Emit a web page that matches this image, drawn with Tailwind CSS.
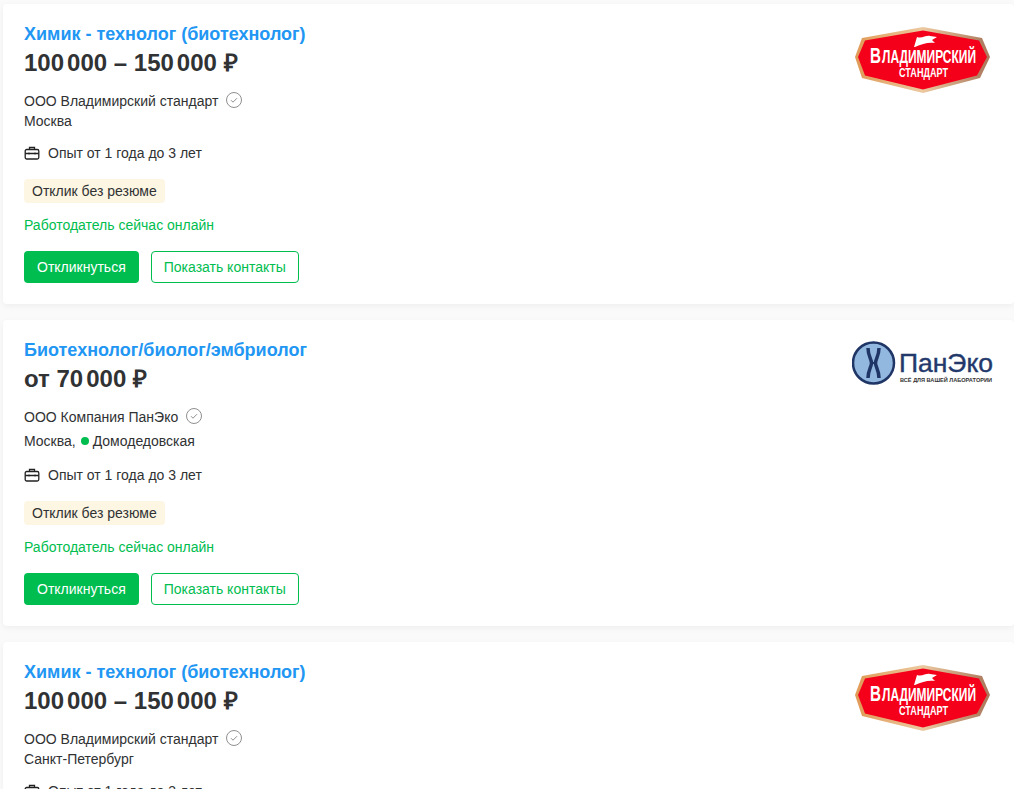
<!DOCTYPE html>
<html lang="ru"><head><meta charset="utf-8"><script src="https://cdn.jsdelivr.net/npm/@tailwindcss/browser@4"></script></head>
<body class="bg-[#fafafa] overflow-hidden h-[789px] font-['Liberation_Sans',Arial,sans-serif] text-[#303233]">
<main class="flex flex-col gap-4 pl-[3px] pt-1">

<article class="relative bg-white rounded-sm shadow-[0_2px_6px_rgba(0,0,0,0.05)] h-[300px] px-[21px] pt-5">
  <h2 class="text-[18px] leading-5 font-bold text-[#2196f3]">Химик - технолог (биотехнолог)</h2>
  <p class="text-2xl leading-7 font-bold mt-[5px]">100<span class="ml-[3px]">000</span> – 150<span class="ml-[3px]">000</span> ₽</p>
  <div class="mt-[14px] flex items-center gap-2 text-sm leading-5 h-5">ООО Владимирский стандарт
    <svg class="w-4 h-4 -translate-y-px" viewBox="0 0 16 16" fill="none" stroke="#8f8f8f"><circle cx="8" cy="8" r="7.5"/><path d="M5 8.2l2 2 4-4"/></svg></div>
  <p class="text-sm leading-5">Москва</p>
  <div class="mt-[12px] flex items-center gap-2 text-sm leading-5 h-5">
    <svg class="w-4 h-4" viewBox="0 0 16 16" fill="none" stroke="#222" stroke-width="1.3"><rect x="1.2" y="4.5" width="13.6" height="9.5" rx="1.5"/><path d="M5.5 4.5V2.5h5v2M1.2 8.5h13.6M5 7.5v2M11 7.5v2"/></svg>Опыт от 1 года до 3 лет</div>
  <div class="mt-4 w-fit bg-[#fdf6e3] rounded px-2 h-6 leading-6 text-sm">Отклик без резюме</div>
  <p class="mt-3 text-sm leading-5 text-[#00bd4f]">Работодатель сейчас онлайн</p>
  <div class="mt-4 flex gap-3 text-sm">
    <button class="h-8 px-[13px] rounded bg-[#00bd4f] text-white">Откликнуться</button>
    <button class="h-8 px-3 rounded border border-[#00bd4f] text-[#00bd4f]">Показать контакты</button>
  </div>
  <svg class="absolute right-[20px] top-[22px] w-[140px] h-[70px]" viewBox="0 0 140 70"><defs><linearGradient id="g1" x1="0" x2="1"><stop offset="0" stop-color="#e09a55"/><stop offset="0.5" stop-color="#ecc9a0"/><stop offset="1" stop-color="#a9765a"/></linearGradient></defs><path d="M1 31 8 12 69 1 128 12 136 31 126 52 69 67 8 52Z" fill="url(#g1)"/><path d="M4 31 11 14.500 69 4.500 125 14.500 133 31 123 49.500 69 63.500 11 49.500Z" fill="#f5001a"/><path d="M60 21 63 11C68 13 72 9 76 10L83 11 78 14 81 17C74 16 68 18 61 21Z" fill="#fff"/><text x="16" y="37" fill="#fff" font-family="'Liberation Sans Narrow','Liberation Sans',sans-serif" font-weight="700" font-size="22" textLength="11" lengthAdjust="spacingAndGlyphs">В</text><text x="28" y="37" fill="#fff" font-family="'Liberation Sans Narrow','Liberation Sans',sans-serif" font-weight="700" font-size="18" textLength="94" lengthAdjust="spacingAndGlyphs">ЛАДИМИРСКИЙ</text><text x="45" y="51" fill="#fff" font-family="'Liberation Sans Narrow','Liberation Sans',sans-serif" font-weight="700" font-size="12" textLength="49" lengthAdjust="spacingAndGlyphs">СТАНДАРТ</text></svg>
</article>

<article class="relative bg-white rounded-sm shadow-[0_2px_6px_rgba(0,0,0,0.05)] h-[306px] px-[21px] pt-5">
  <h2 class="text-[18px] leading-5 font-bold text-[#2196f3]">Биотехнолог/биолог/эмбриолог</h2>
  <p class="text-2xl leading-7 font-bold mt-[5px]">от 70<span class="ml-[3px]">000</span> ₽</p>
  <div class="mt-[14px] flex items-center gap-2 text-sm leading-5 h-5">ООО Компания ПанЭко
    <svg class="w-4 h-4 -translate-y-px" viewBox="0 0 16 16" fill="none" stroke="#8f8f8f"><circle cx="8" cy="8" r="7.5"/><path d="M5 8.2l2 2 4-4"/></svg></div>
  <div class="text-sm leading-5 mt-[4px] flex items-center">Москва,<span class="w-2 h-2 rounded-full bg-[#00bd4f] ml-[5px] mr-[4px]"></span>Домодедовская</div>
  <div class="mt-[14px] flex items-center gap-2 text-sm leading-5 h-5">
    <svg class="w-4 h-4" viewBox="0 0 16 16" fill="none" stroke="#222" stroke-width="1.3"><rect x="1.2" y="4.5" width="13.6" height="9.5" rx="1.5"/><path d="M5.5 4.5V2.5h5v2M1.2 8.5h13.6M5 7.5v2M11 7.5v2"/></svg>Опыт от 1 года до 3 лет</div>
  <div class="mt-4 w-fit bg-[#fdf6e3] rounded px-2 h-6 leading-6 text-sm">Отклик без резюме</div>
  <p class="mt-3 text-sm leading-5 text-[#00bd4f]">Работодатель сейчас онлайн</p>
  <div class="mt-4 flex gap-3 text-sm">
    <button class="h-8 px-[13px] rounded bg-[#00bd4f] text-white">Откликнуться</button>
    <button class="h-8 px-3 rounded border border-[#00bd4f] text-[#00bd4f]">Показать контакты</button>
  </div>
  <svg class="absolute right-[20px] top-[20px] w-[142px] h-[46px]" viewBox="0 0 142 46"><circle cx="21.500" cy="23" r="20.500" fill="#93b8e0" stroke="#1f3565" stroke-width="2.500"/><path d="M16 8C16 16 19.500 19 19.500 23S16 30 16 38M27 8C27 16 23.500 19 23.500 23S27 30 27 38" fill="none" stroke="#1f3565" stroke-width="3.500"/><path d="M19 23H24" stroke="#1f3565" stroke-width="2"/><text x="47" y="32" fill="#24396b" stroke="#24396b" stroke-width="0.4" font-family="'Liberation Sans',sans-serif" font-size="26" textLength="94" lengthAdjust="spacingAndGlyphs">ПанЭко</text><text x="48" y="42" fill="#333" font-family="'Liberation Sans',sans-serif" font-weight="700" font-size="6" textLength="92" lengthAdjust="spacingAndGlyphs">ВСЁ ДЛЯ ВАШЕЙ ЛАБОРАТОРИИ</text></svg>
</article>

<article class="relative bg-white rounded-sm shadow-[0_2px_6px_rgba(0,0,0,0.05)] h-[300px] px-[21px] pt-5">
  <h2 class="text-[18px] leading-5 font-bold text-[#2196f3]">Химик - технолог (биотехнолог)</h2>
  <p class="text-2xl leading-7 font-bold mt-[5px]">100<span class="ml-[3px]">000</span> – 150<span class="ml-[3px]">000</span> ₽</p>
  <div class="mt-[14px] flex items-center gap-2 text-sm leading-5 h-5">ООО Владимирский стандарт
    <svg class="w-4 h-4 -translate-y-px" viewBox="0 0 16 16" fill="none" stroke="#8f8f8f"><circle cx="8" cy="8" r="7.5"/><path d="M5 8.2l2 2 4-4"/></svg></div>
  <p class="text-sm leading-5">Санкт-Петербург</p>
  <div class="mt-[12px] flex items-center gap-2 text-sm leading-5 h-5">
    <svg class="w-4 h-4" viewBox="0 0 16 16" fill="none" stroke="#222" stroke-width="1.3"><rect x="1.2" y="4.5" width="13.6" height="9.5" rx="1.5"/><path d="M5.5 4.5V2.5h5v2M1.2 8.5h13.6M5 7.5v2M11 7.5v2"/></svg>Опыт от 1 года до 3 лет</div>
  <svg class="absolute right-[20px] top-[22px] w-[140px] h-[70px]" viewBox="0 0 140 70"><defs><linearGradient id="g2" x1="0" x2="1"><stop offset="0" stop-color="#e09a55"/><stop offset="0.5" stop-color="#ecc9a0"/><stop offset="1" stop-color="#a9765a"/></linearGradient></defs><path d="M1 31 8 12 69 1 128 12 136 31 126 52 69 67 8 52Z" fill="url(#g2)"/><path d="M4 31 11 14.500 69 4.500 125 14.500 133 31 123 49.500 69 63.500 11 49.500Z" fill="#f5001a"/><path d="M60 21 63 11C68 13 72 9 76 10L83 11 78 14 81 17C74 16 68 18 61 21Z" fill="#fff"/><text x="16" y="37" fill="#fff" font-family="'Liberation Sans Narrow','Liberation Sans',sans-serif" font-weight="700" font-size="22" textLength="11" lengthAdjust="spacingAndGlyphs">В</text><text x="28" y="37" fill="#fff" font-family="'Liberation Sans Narrow','Liberation Sans',sans-serif" font-weight="700" font-size="18" textLength="94" lengthAdjust="spacingAndGlyphs">ЛАДИМИРСКИЙ</text><text x="45" y="51" fill="#fff" font-family="'Liberation Sans Narrow','Liberation Sans',sans-serif" font-weight="700" font-size="12" textLength="49" lengthAdjust="spacingAndGlyphs">СТАНДАРТ</text></svg>
</article>

</main>
</body></html>
